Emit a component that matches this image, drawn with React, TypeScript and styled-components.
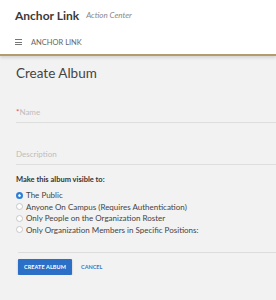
import styled, { createGlobalStyle } from 'styled-components';

const Global = createGlobalStyle`
  html, body {
    margin: 0;
    padding: 0;
    background: #f2f2f2;
    font-family: Lato, 'Open Sans', sans-serif;
  }
`;

const Header = styled.header`
  background: #fff;
  border-bottom: 2px solid #b29c6c;
  box-shadow: 0 2px 3px rgba(0, 0, 0, 0.12);
  padding: 0 15px;
`;

const TitleRow = styled.div`
  height: 30px;
  display: flex;
  align-items: center;
  gap: 7px;
`;

const Brand = styled.span`
  font-size: 12px;
  font-weight: 700;
  color: #3a3a3a;
`;

const Sub = styled.span`
  font-size: 8px;
  font-style: italic;
  color: #888;
`;

const NavRow = styled.div`
  height: 24px;
  display: flex;
  align-items: center;
  gap: 9px;
  font-size: 7.5px;
  color: #666;
`;

const Burger = styled.span`
  display: flex;
  flex-direction: column;
  gap: 1.5px;
  width: 7px;

  i {
    display: block;
    height: 1px;
    background: #777;
  }
`;

const Main = styled.main`
  padding: 10px 0 0 16px;
`;

const Title = styled.h1`
  margin: 0;
  font-size: 13.5px;
  font-weight: 400;
  color: #444;
  line-height: 14px;
`;

const Field = styled.div<{ $top: number }>`
  margin-top: ${(p) => p.$top}px;
  border-bottom: 1px solid #dedede;
  padding-bottom: 5px;
  font-size: 8px;
  line-height: 10px;
  color: #bdbdbd;

  b {
    color: #e0514a;
    font-weight: 400;
  }
`;

const Legend = styled.div`
  margin-top: 10px;
  font-size: 7.5px;
  font-weight: 700;
  color: #333;
  line-height: 10px;
`;

const Options = styled.div`
  margin-top: 5px;
  display: flex;
  flex-direction: column;
  gap: 1.5px;
`;

const Option = styled.label`
  display: flex;
  align-items: center;
  gap: 3px;
  height: 10px;
  font-size: 8px;
  line-height: 10px;
  color: #444;
`;

const Dot = styled.span<{ $on?: boolean }>`
  width: 7px;
  height: 7px;
  border-radius: 50%;
  box-sizing: border-box;
  background: ${(p) => (p.$on ? '#2f7fd6' : '#fff')};
  border: ${(p) => (p.$on ? '2px solid #2f7fd6' : '1px solid #c8c8c8')};
  box-shadow: ${(p) => (p.$on ? 'inset 0 0 0 1.5px #fff' : 'none')};
`;

const Footer = styled.div`
  margin: 17px 0 0 2px;
  border-top: 1px solid #dcdcdc;
  padding-top: 6px;
  display: flex;
  align-items: center;
  gap: 9px;
`;

const Primary = styled.button`
  width: 54px;
  height: 16px;
  border: 0;
  border-radius: 1px;
  background: #2c6fc7;
  color: #fff;
  font-family: inherit;
  font-size: 5.5px;
  font-weight: 700;
  letter-spacing: 0.1px;
  padding: 0;
  box-shadow: 0 1px 2px rgba(0, 0, 0, 0.25);
`;

const Link = styled.span`
  font-size: 5.5px;
  font-weight: 700;
  color: #3a78c9;
`;

const options = [
  'The Public',
  'Anyone On Campus (Requires Authentication)',
  'Only People on the Organization Roster',
  'Only Organization Members in Specific Positions:',
];

export default function App() {
  return (
    <>
      <Global />
      <Header>
        <TitleRow>
          <Brand>Anchor Link</Brand>
          <Sub>Action Center</Sub>
        </TitleRow>
        <NavRow>
          <Burger>
            <i />
            <i />
            <i />
          </Burger>
          ANCHOR LINK
        </NavRow>
      </Header>
      <Main>
        <Title>Create Album</Title>
        <Field $top={27}>
          <b>*</b>Name
        </Field>
        <Field $top={26}>Description</Field>
        <Legend>Make this album visible to:</Legend>
        <Options>
          {options.map((o, i) => (
            <Option key={o}>
              <Dot $on={i === 0} />
              {o}
            </Option>
          ))}
        </Options>
        <Footer>
          <Primary>CREATE ALBUM</Primary>
          <Link>CANCEL</Link>
        </Footer>
      </Main>
    </>
  );
}
